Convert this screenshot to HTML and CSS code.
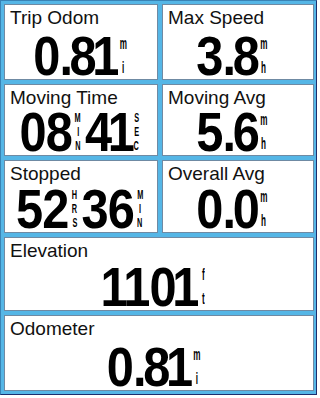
FILE: index.html
```html
<!DOCTYPE html>
<html>
<head>
<meta charset="utf-8">
<link rel="stylesheet" href="styles.css">
</head>
<body>
<div class="frame">
  <div class="grid">
    <div class="cell">
      <div class="label">Trip Odom</div>
      <div class="value">
        <span class="num">0<span class="dot">.</span>8<span class="one">1</span></span><span class="unit"><span>m</span><span>i</span></span>
      </div>
    </div>
    <div class="cell right">
      <div class="label">Max Speed</div>
      <div class="value">
        <span class="num">3<span class="dot">.</span>8</span><span class="unit"><span>m</span><span>h</span></span>
      </div>
    </div>
    <div class="cell">
      <div class="label">Moving Time</div>
      <div class="value">
        <span class="num">08</span><span class="unit caps"><span>M</span><span>I</span><span>N</span></span><span class="num">4<span class="one">1</span></span><span class="unit caps after-one"><span>S</span><span>E</span><span>C</span></span>
      </div>
    </div>
    <div class="cell right">
      <div class="label">Moving Avg</div>
      <div class="value">
        <span class="num">5<span class="dot">.</span>6</span><span class="unit"><span>m</span><span>h</span></span>
      </div>
    </div>
    <div class="cell">
      <div class="label">Stopped</div>
      <div class="value">
        <span class="num">52</span><span class="unit caps"><span>H</span><span>R</span><span>S</span></span><span class="num">36</span><span class="unit caps"><span>M</span><span>I</span><span>N</span></span>
      </div>
    </div>
    <div class="cell right">
      <div class="label">Overall Avg</div>
      <div class="value">
        <span class="num">0<span class="dot">.</span>0</span><span class="unit"><span>m</span><span>h</span></span>
      </div>
    </div>
    <div class="cell wide">
      <div class="label">Elevation</div>
      <div class="value">
        <span class="num">1<span class="one">1</span>0<span class="one">1</span></span><span class="unit"><span>f</span><span>t</span></span>
      </div>
    </div>
    <div class="cell wide">
      <div class="label">Odometer</div>
      <div class="value">
        <span class="num">0<span class="dot">.</span>8<span class="one">1</span></span><span class="unit"><span>m</span><span>i</span></span>
      </div>
    </div>
  </div>
</div>
</body>
</html>
```
FILE: styles.css
```css
html, body {
  margin: 0;
  padding: 0;
  background: #ffffff;
}

.frame {
  width: 317px;
  height: 395px;
  box-sizing: border-box;
  background: #55b6e6;
  border-style: solid;
  border-width: 1px;
  border-color: #3a83b5 #1c2e6e #1c2e6e #3a83b5;
  padding: 3px 2px 3px 3px;
}

.grid {
  display: grid;
  grid-template-columns: 154px 152px;
  grid-template-rows: 76px 72px 73px 74px 76px;
  gap: 4px;
}

.cell {
  background: #ffffff;
  border: 1px solid #6f8aa3;
  box-sizing: border-box;
  display: flex;
  flex-direction: column;
  padding: 3px 4px 3px 5px;
  min-width: 0;
}

.wide {
  grid-column: 1 / 3;
}

.label {
  font-family: "Liberation Sans", Arial, sans-serif;
  font-size: 19px;
  line-height: 20px;
  color: #111111;
  white-space: nowrap;
}

.value {
  margin-top: auto;
  display: flex;
  justify-content: center;
  align-items: flex-start;
  color: #000000;
  transform: scaleX(0.87);
  transform-origin: 50% 50%;
}

.right .value {
  padding-right: 12px;
}

.wide .value {
  padding-right: 10px;
}

.num {
  font-family: "Liberation Sans", Arial, sans-serif;
  font-weight: bold;
  font-size: 56px;
  line-height: 40px;
  letter-spacing: -1px;
  white-space: nowrap;
}

.dot {
  margin-right: -3px;
}

.one {
  margin-left: -4px;
}

.unit {
  display: flex;
  flex-direction: column;
  justify-content: space-between;
  align-items: center;
  width: 9px;
  height: 40px;
  margin: 0 3px 0 1px;
  font-family: "Liberation Sans", Arial, sans-serif;
  font-weight: bold;
  font-size: 17px;
  line-height: 16px;
  color: #000000;
}

.unit span {
  display: block;
  transform: scaleX(0.55);
}

.unit.caps {
  font-size: 12px;
  line-height: 12px;
  width: 8px;
  margin: 0 4px 0 3px;
}

.unit.caps.after-one {
  margin-left: -1px;
}

.unit.caps span {
  transform: scaleX(0.7);
}
```
